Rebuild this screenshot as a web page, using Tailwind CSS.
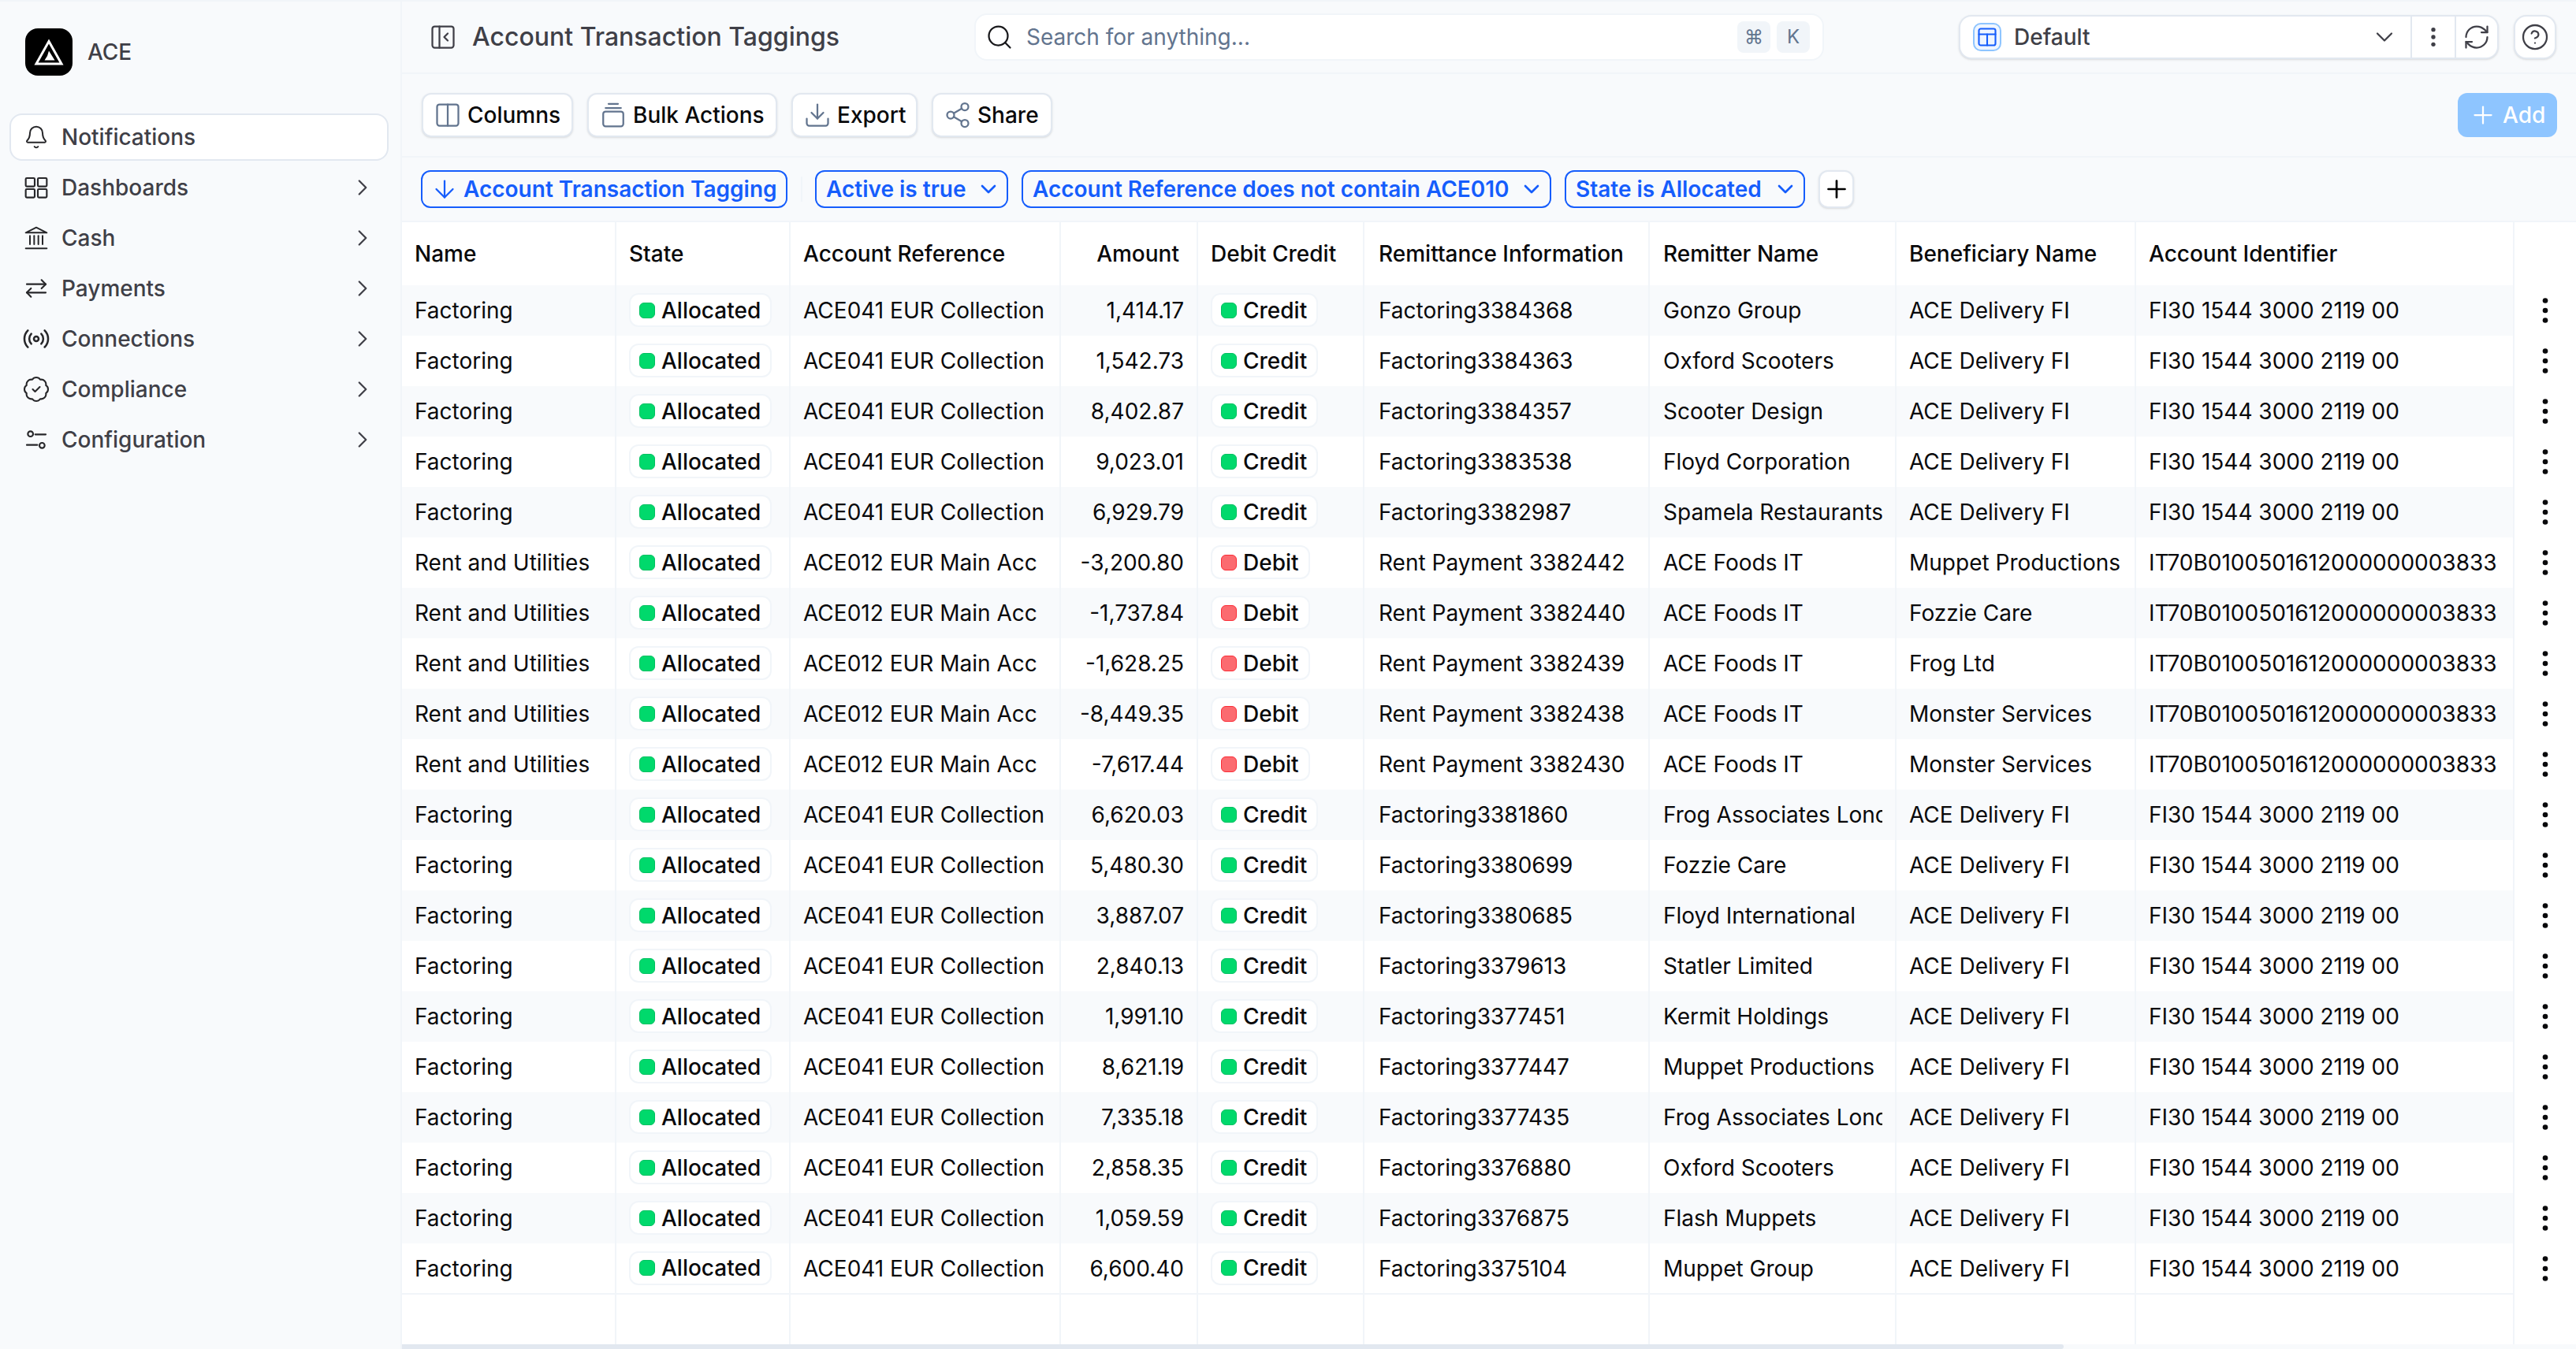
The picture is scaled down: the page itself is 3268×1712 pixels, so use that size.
<!DOCTYPE html>
<html lang="en">
<head>
    <meta charset="UTF-8">
    <title>Account Transaction Taggings</title>
    <script src="https://cdn.jsdelivr.net/npm/@tailwindcss/browser@4"></script>
</head>
<body class="bg-[#f8fafc] font-['Inter',sans-serif] text-[28px] text-zinc-950 overflow-hidden">
<div class="flex h-[1712px] w-[3268px] border-t-2 border-slate-100">

    <!-- sidebar -->
    <aside class="w-[510px] shrink-0 border-r-2 border-slate-100 pl-3 pr-[15px]">
        <div class="flex h-[142px] items-start gap-[19px] pl-5 pt-[34px]">
            <div class="flex size-[60px] items-center justify-center rounded-2xl bg-black">
                <svg class="size-[60px]" viewBox="0 0 60 60" fill="none" stroke="white" stroke-width="3">
                    <path d="M30 16.5 46 45H14Z"/>
                    <path d="M30 28.5 37.5 40.5H24.5L28 35Z" fill="white" stroke="none"/>
                </svg>
            </div>
            <span class="font-medium leading-[60px] text-zinc-700">ACE</span>
        </div>
        <nav class="flex flex-col font-medium text-zinc-700">
            <a class="mb-0.5 flex h-[60px] items-center gap-4 rounded-2xl border-2 border-slate-200 bg-white pl-4">
                <svg class="size-8 text-zinc-800" viewBox="0 0 24 24" fill="none" stroke="currentColor" stroke-width="1.5" stroke-linecap="round" stroke-linejoin="round"><path d="M10.268 21a2 2 0 0 0 3.464 0"/><path d="M3.262 15.326A1 1 0 0 0 4 17h16a1 1 0 0 0 .74-1.673C19.41 13.956 18 12.499 18 8A6 6 0 0 0 6 8c0 4.499-1.411 5.956-2.738 7.326"/></svg>
                Notifications
            </a>
            <a class="flex h-[64px] items-center gap-4 pl-[18px] pr-4">
                <svg class="size-8 text-zinc-800" viewBox="0 0 24 24" fill="none" stroke="currentColor" stroke-width="1.6" stroke-linejoin="round"><rect x="2" y="3" width="8.5" height="8" rx="1"/><rect x="13.5" y="3" width="8.5" height="8" rx="1"/><rect x="2" y="13.5" width="8.5" height="8" rx="1"/><rect x="13.5" y="13.5" width="8.5" height="8" rx="1"/></svg>
                Dashboards
                <svg class="ml-auto size-[34px]" viewBox="0 0 24 24" fill="none" stroke="currentColor" stroke-width="1.6" stroke-linecap="round" stroke-linejoin="round"><path d="m9 18 6-6-6-6"/></svg>
            </a>
            <a class="flex h-[64px] items-center gap-4 pl-[18px] pr-4">
                <svg class="size-8 text-zinc-800" viewBox="0 0 24 24" fill="none" stroke="currentColor" stroke-width="1.5" stroke-linecap="round" stroke-linejoin="round"><path d="M2 22h20"/><path d="M6 18v-8"/><path d="M10 18v-8"/><path d="M14 18v-8"/><path d="M18 18v-8"/><path d="M2 7 12 2l10 5Z"/></svg>
                Cash
                <svg class="ml-auto size-[34px]" viewBox="0 0 24 24" fill="none" stroke="currentColor" stroke-width="1.6" stroke-linecap="round" stroke-linejoin="round"><path d="m9 18 6-6-6-6"/></svg>
            </a>
            <a class="flex h-[64px] items-center gap-4 pl-[18px] pr-4">
                <svg class="size-8 text-zinc-800" viewBox="0 0 24 24" fill="none" stroke="currentColor" stroke-width="1.6" stroke-linecap="round" stroke-linejoin="round"><path d="M21 8H3"/><path d="m17 4 4 4-4 4"/><path d="M3 16h18"/><path d="m7 12-4 4 4 4"/></svg>
                Payments
                <svg class="ml-auto size-[34px]" viewBox="0 0 24 24" fill="none" stroke="currentColor" stroke-width="1.6" stroke-linecap="round" stroke-linejoin="round"><path d="m9 18 6-6-6-6"/></svg>
            </a>
            <a class="flex h-[64px] items-center gap-4 pl-[18px] pr-4">
                <svg class="-mx-0.5 size-9 text-zinc-800" viewBox="0 0 24 24" fill="none" stroke="currentColor" stroke-width="1.7" stroke-linecap="round" stroke-linejoin="round"><path d="M4.9 19.1C1 15.2 1 8.8 4.9 4.9"/><path d="M7.8 16.2c-2.3-2.3-2.3-6.1 0-8.5"/><circle cx="12" cy="12" r="2"/><path d="M16.2 7.8c2.3 2.3 2.3 6.1 0 8.5"/><path d="M19.1 4.9C23 8.8 23 15.1 19.1 19"/></svg>
                Connections
                <svg class="ml-auto size-[34px]" viewBox="0 0 24 24" fill="none" stroke="currentColor" stroke-width="1.6" stroke-linecap="round" stroke-linejoin="round"><path d="m9 18 6-6-6-6"/></svg>
            </a>
            <a class="flex h-[64px] items-center gap-4 pl-[18px] pr-4">
                <svg class="-mx-0.5 size-9 text-zinc-800" viewBox="0 0 24 24" fill="none" stroke="currentColor" stroke-width="1.4" stroke-linecap="round" stroke-linejoin="round"><path d="M3.85 8.62a4 4 0 0 1 4.78-4.77 4 4 0 0 1 6.74 0 4 4 0 0 1 4.78 4.78 4 4 0 0 1 0 6.74 4 4 0 0 1-4.77 4.78 4 4 0 0 1-6.75 0 4 4 0 0 1-4.78-4.77 4 4 0 0 1 0-6.76Z"/><path d="m9 12 2 2 4-4"/></svg>
                Compliance
                <svg class="ml-auto size-[34px]" viewBox="0 0 24 24" fill="none" stroke="currentColor" stroke-width="1.6" stroke-linecap="round" stroke-linejoin="round"><path d="m9 18 6-6-6-6"/></svg>
            </a>
            <a class="flex h-[64px] items-center gap-4 pl-[18px] pr-4">
                <svg class="size-8 text-zinc-800" viewBox="0 0 24 24" fill="none" stroke="currentColor" stroke-width="1.6" stroke-linecap="round" stroke-linejoin="round"><path d="M11 7h10"/><circle cx="6.5" cy="6.5" r="2.5"/><path d="M3 17h10"/><circle cx="17.5" cy="17.5" r="2.5"/></svg>
                Configuration
                <svg class="ml-auto size-[34px]" viewBox="0 0 24 24" fill="none" stroke="currentColor" stroke-width="1.6" stroke-linecap="round" stroke-linejoin="round"><path d="m9 18 6-6-6-6"/></svg>
            </a>
        </nav>
    </aside>

    <main class="flex min-w-0 flex-1 flex-col">
        <!-- top bar -->
        <header class="flex h-[92px] shrink-0 items-center border-b-2 border-slate-100 pl-[34px]">
            <svg class="size-9 text-zinc-700" viewBox="0 0 24 24" fill="none" stroke="currentColor" stroke-width="1.5" stroke-linecap="round" stroke-linejoin="round"><rect x="3" y="3" width="18" height="18" rx="2"/><path d="M9 3v18"/><path d="m16 15-3-3 3-3"/></svg>
            <h1 class="ml-[19px] w-[637px] text-[32px] font-medium text-zinc-700">Account Transaction Taggings</h1>
            <div class="flex h-[60px] w-[1078px] items-center rounded-2xl border-2 border-slate-100 bg-white pl-3 pr-4">
                <svg class="size-9 text-zinc-900" viewBox="0 0 24 24" fill="none" stroke="currentColor" stroke-width="1.5" stroke-linecap="round" stroke-linejoin="round"><circle cx="11" cy="11" r="8"/><path d="m21 21-4.3-4.3"/></svg>
                <span class="ml-4 text-slate-500">Search for anything...</span>
                <span class="ml-auto flex gap-2 text-[24px] text-slate-500">
                    <kbd class="flex h-10 w-[42px] items-center justify-center rounded-lg bg-slate-100 font-['Inter',sans-serif]">⌘</kbd>
                    <kbd class="flex h-10 w-[42px] items-center justify-center rounded-lg bg-slate-100 font-['Inter',sans-serif]">K</kbd>
                </span>
            </div>
            <div class="ml-[171px] flex h-14 w-[685px] items-center rounded-2xl border-2 border-slate-200 bg-white shadow-sm">
                <div class="ml-4 flex size-9 items-center justify-center rounded-[10px] border-2 border-blue-300 bg-blue-50">
                    <svg class="size-7 text-blue-600" viewBox="0 0 24 24" fill="none" stroke="currentColor" stroke-width="1.8" stroke-linecap="round" stroke-linejoin="round"><rect x="3" y="3" width="18" height="18" rx="2"/><path d="M3 9h18"/><path d="M12 9v12"/></svg>
                </div>
                <span class="ml-4 font-medium text-zinc-700">Default</span>
                <svg class="ml-auto mr-[15px] size-9 text-zinc-700" viewBox="0 0 24 24" fill="none" stroke="currentColor" stroke-width="1.5" stroke-linecap="round" stroke-linejoin="round"><path d="m6 9 6 6 6-6"/></svg>
                <div class="flex h-full w-[56px] items-center justify-center border-l-2 border-slate-200">
                    <svg class="size-8 text-zinc-700" viewBox="0 0 24 24" fill="currentColor"><circle cx="12" cy="5" r="2"/><circle cx="12" cy="12" r="2"/><circle cx="12" cy="19" r="2"/></svg>
                </div>
                <div class="flex h-full w-[54px] items-center justify-center border-l-2 border-slate-200">
                    <svg class="size-9 text-zinc-700" viewBox="0 0 24 24" fill="none" stroke="currentColor" stroke-width="1.5" stroke-linecap="round" stroke-linejoin="round"><path d="M3 12a9 9 0 0 1 9-9 9.75 9.75 0 0 1 6.74 2.74L21 8"/><path d="M21 3v5h-5"/><path d="M21 12a9 9 0 0 1-9 9 9.75 9.75 0 0 1-6.74-2.74L3 16"/><path d="M8 16H3v5"/></svg>
                </div>
            </div>
            <div class="ml-[19px] flex h-14 w-[54px] items-center justify-center rounded-2xl border-2 border-slate-200 bg-white shadow-sm">
                <svg class="size-9 text-zinc-700" viewBox="0 0 24 24" fill="none" stroke="currentColor" stroke-width="1.5" stroke-linecap="round" stroke-linejoin="round"><circle cx="12" cy="12" r="10"/><path d="M9.09 9a3 3 0 0 1 5.83 1c0 2-3 3-3 3"/><path d="M12 17h.01"/></svg>
            </div>
        </header>

        <!-- toolbar -->
        <div class="flex h-[106px] shrink-0 items-center gap-[18px] border-b-2 border-slate-100 pl-[25px] pr-6">
            <button class="flex h-[56px] w-[192px] items-center gap-[7px] rounded-xl border-2 border-slate-200 bg-white pl-[13px] font-medium shadow-sm">
                <svg class="size-9 text-slate-500" viewBox="0 0 24 24" fill="none" stroke="currentColor" stroke-width="1.5" stroke-linecap="round" stroke-linejoin="round"><rect x="3" y="3" width="18" height="18" rx="2"/><path d="M12 3v18"/></svg>
                Columns
            </button>
            <button class="flex h-[56px] w-[241px] items-center gap-[7px] rounded-xl border-2 border-slate-200 bg-white pl-[13px] font-medium shadow-sm">
                <svg class="size-9 text-slate-500" viewBox="0 0 24 24" fill="none" stroke="currentColor" stroke-width="1.5" stroke-linecap="round" stroke-linejoin="round"><rect x="3.5" y="9" width="17" height="12.5" rx="2"/><path d="M5.5 6h13"/><path d="M8 2.5h8"/></svg>
                Bulk Actions
            </button>
            <button class="flex h-[56px] w-[160px] items-center gap-[7px] rounded-xl border-2 border-slate-200 bg-white pl-[13px] font-medium shadow-sm">
                <svg class="size-9 text-slate-500" viewBox="0 0 24 24" fill="none" stroke="currentColor" stroke-width="1.5" stroke-linecap="round" stroke-linejoin="round"><path d="M12 15V3"/><path d="M21 15v4a2 2 0 0 1-2 2H5a2 2 0 0 1-2-2v-4"/><path d="m7 10 5 5 5-5"/></svg>
                Export
            </button>
            <button class="flex h-[56px] w-[153px] items-center gap-[7px] rounded-xl border-2 border-slate-200 bg-white pl-[13px] font-medium shadow-sm">
                <svg class="size-9 text-slate-500" viewBox="0 0 24 24" fill="none" stroke="currentColor" stroke-width="1.5" stroke-linecap="round" stroke-linejoin="round"><circle cx="18" cy="5" r="3"/><circle cx="6" cy="12" r="3"/><circle cx="18" cy="19" r="3"/><path d="m8.59 13.51 6.83 3.98"/><path d="m15.41 6.51-6.82 3.98"/></svg>
                Share
            </button>
            <button class="ml-auto flex h-[56px] w-[126px] items-center gap-[7px] rounded-xl bg-blue-300 pl-3.5 font-medium text-white">
                <svg class="size-9" viewBox="0 0 24 24" fill="none" stroke="currentColor" stroke-width="1.5" stroke-linecap="round" stroke-linejoin="round"><path d="M5 12h14"/><path d="M12 5v14"/></svg>
                Add
            </button>
        </div>

        <!-- filters -->
        <div class="flex h-[82px] shrink-0 items-center border-b-2 border-slate-100 pl-[24px] font-semibold text-blue-600">
            <div class="flex h-12 w-[465px] items-center gap-1.5 rounded-xl border-2 border-blue-600 pl-2.5">
                <svg class="size-9" viewBox="0 0 24 24" fill="none" stroke="currentColor" stroke-width="1.5" stroke-linecap="round" stroke-linejoin="round"><path d="M12 5v14"/><path d="m19 12-7 7-7-7"/></svg>
                Account Transaction Tagging
            </div>
            <div class="ml-[17px] mr-4 h-8 w-0.5 bg-slate-100"></div>
            <div class="flex h-12 w-[245px] items-center justify-between rounded-xl border-2 border-blue-600 pl-3 pr-[7px]">
                Active is true
                <svg class="size-8" viewBox="0 0 24 24" fill="none" stroke="currentColor" stroke-width="2" stroke-linecap="round" stroke-linejoin="round"><path d="m6 9 6 6 6-6"/></svg>
            </div>
            <div class="ml-[17px] flex h-12 w-[672px] items-center justify-between rounded-xl border-2 border-blue-600 pl-3 pr-[7px]">
                Account Reference does not contain ACE010
                <svg class="size-8" viewBox="0 0 24 24" fill="none" stroke="currentColor" stroke-width="2" stroke-linecap="round" stroke-linejoin="round"><path d="m6 9 6 6 6-6"/></svg>
            </div>
            <div class="ml-[17px] flex h-12 w-[305px] items-center justify-between rounded-xl border-2 border-blue-600 pl-3 pr-[7px]">
                State is Allocated
                <svg class="size-8" viewBox="0 0 24 24" fill="none" stroke="currentColor" stroke-width="2" stroke-linecap="round" stroke-linejoin="round"><path d="m6 9 6 6 6-6"/></svg>
            </div>
            <button class="ml-[17px] flex h-12 w-[45px] items-center justify-center rounded-xl border-2 border-slate-200 bg-white text-black shadow-sm">
                <svg class="size-9 shrink-0" viewBox="0 0 24 24" fill="none" stroke="currentColor" stroke-width="1.8" stroke-linecap="round" stroke-linejoin="round"><path d="M5 12h14"/><path d="M12 5v14"/></svg>
            </button>
        </div>

        <!-- table -->
        <div class="min-h-0 flex-1 bg-white">
            <table class="w-[2758px] table-fixed border-collapse">
                <colgroup>
                    <col class="w-[271px]"><col class="w-[221px]"><col class="w-[343px]"><col class="w-[174px]"><col class="w-[211px]">
                    <col class="w-[362px]"><col class="w-[313px]"><col class="w-[304px]"><col class="w-[480px]"><col class="w-[79px]">
                </colgroup>
                <thead>
                    <tr class="h-20 text-left">
                        <th class="border-r-2 border-slate-100 pl-4 font-medium">Name</th>
                        <th class="border-r-2 border-slate-100 pl-4 font-medium">State</th>
                        <th class="border-r-2 border-slate-100 pl-4 font-medium">Account Reference</th>
                        <th class="border-r-2 border-slate-100 pr-[22px] text-right font-medium">Amount</th>
                        <th class="border-r-2 border-slate-100 pl-4 font-medium">Debit Credit</th>
                        <th class="border-r-2 border-slate-100 pl-[18px] font-medium">Remittance Information</th>
                        <th class="border-r-2 border-slate-100 pl-[17px] font-medium">Remitter Name</th>
                        <th class="border-r-2 border-slate-100 pl-4 font-medium">Beneficiary Name</th>
                        <th class="border-r-2 border-slate-100 pl-4 font-medium">Account Identifier</th>
                        <th></th>
                    </tr>
                </thead>
                <tbody id="rows"></tbody>
            </table>
        </div>
        <!-- horizontal scrollbar -->
        <div class="h-[6px] shrink-0 bg-[#f8fafc]">
            <div class="h-full w-[2108px] rounded-r-full bg-slate-200"></div>
        </div>
    </main>
</div>

<script>
    const rows = [
        ['Factoring', 'ACE041 EUR Collection', '1,414.17', 'Credit', 'Factoring3384368', 'Gonzo Group', 'ACE Delivery FI', 'FI30 1544 3000 2119 00'],
        ['Factoring', 'ACE041 EUR Collection', '1,542.73', 'Credit', 'Factoring3384363', 'Oxford Scooters', 'ACE Delivery FI', 'FI30 1544 3000 2119 00'],
        ['Factoring', 'ACE041 EUR Collection', '8,402.87', 'Credit', 'Factoring3384357', 'Scooter Design', 'ACE Delivery FI', 'FI30 1544 3000 2119 00'],
        ['Factoring', 'ACE041 EUR Collection', '9,023.01', 'Credit', 'Factoring3383538', 'Floyd Corporation', 'ACE Delivery FI', 'FI30 1544 3000 2119 00'],
        ['Factoring', 'ACE041 EUR Collection', '6,929.79', 'Credit', 'Factoring3382987', 'Spamela Restaurants', 'ACE Delivery FI', 'FI30 1544 3000 2119 00'],
        ['Rent and Utilities', 'ACE012 EUR Main Acc', '-3,200.80', 'Debit', 'Rent Payment 3382442', 'ACE Foods IT', 'Muppet Productions', 'IT70B0100501612000000003833'],
        ['Rent and Utilities', 'ACE012 EUR Main Acc', '-1,737.84', 'Debit', 'Rent Payment 3382440', 'ACE Foods IT', 'Fozzie Care', 'IT70B0100501612000000003833'],
        ['Rent and Utilities', 'ACE012 EUR Main Acc', '-1,628.25', 'Debit', 'Rent Payment 3382439', 'ACE Foods IT', 'Frog Ltd', 'IT70B0100501612000000003833'],
        ['Rent and Utilities', 'ACE012 EUR Main Acc', '-8,449.35', 'Debit', 'Rent Payment 3382438', 'ACE Foods IT', 'Monster Services', 'IT70B0100501612000000003833'],
        ['Rent and Utilities', 'ACE012 EUR Main Acc', '-7,617.44', 'Debit', 'Rent Payment 3382430', 'ACE Foods IT', 'Monster Services', 'IT70B0100501612000000003833'],
        ['Factoring', 'ACE041 EUR Collection', '6,620.03', 'Credit', 'Factoring3381860', 'Frog Associates London', 'ACE Delivery FI', 'FI30 1544 3000 2119 00'],
        ['Factoring', 'ACE041 EUR Collection', '5,480.30', 'Credit', 'Factoring3380699', 'Fozzie Care', 'ACE Delivery FI', 'FI30 1544 3000 2119 00'],
        ['Factoring', 'ACE041 EUR Collection', '3,887.07', 'Credit', 'Factoring3380685', 'Floyd International', 'ACE Delivery FI', 'FI30 1544 3000 2119 00'],
        ['Factoring', 'ACE041 EUR Collection', '2,840.13', 'Credit', 'Factoring3379613', 'Statler Limited', 'ACE Delivery FI', 'FI30 1544 3000 2119 00'],
        ['Factoring', 'ACE041 EUR Collection', '1,991.10', 'Credit', 'Factoring3377451', 'Kermit Holdings', 'ACE Delivery FI', 'FI30 1544 3000 2119 00'],
        ['Factoring', 'ACE041 EUR Collection', '8,621.19', 'Credit', 'Factoring3377447', 'Muppet Productions', 'ACE Delivery FI', 'FI30 1544 3000 2119 00'],
        ['Factoring', 'ACE041 EUR Collection', '7,335.18', 'Credit', 'Factoring3377435', 'Frog Associates London', 'ACE Delivery FI', 'FI30 1544 3000 2119 00'],
        ['Factoring', 'ACE041 EUR Collection', '2,858.35', 'Credit', 'Factoring3376880', 'Oxford Scooters', 'ACE Delivery FI', 'FI30 1544 3000 2119 00'],
        ['Factoring', 'ACE041 EUR Collection', '1,059.59', 'Credit', 'Factoring3376875', 'Flash Muppets', 'ACE Delivery FI', 'FI30 1544 3000 2119 00'],
        ['Factoring', 'ACE041 EUR Collection', '6,600.40', 'Credit', 'Factoring3375104', 'Muppet Group', 'ACE Delivery FI', 'FI30 1544 3000 2119 00'],
    ];

    const line = 'border-r-2 border-slate-100 whitespace-nowrap';
    const badge = 'inline-flex h-[43px] -translate-y-px items-center gap-2 rounded-xl border-2 border-slate-100 bg-white pl-[11px] pr-3 font-medium align-middle';
    const green = 'h-5 w-5 rounded-md border border-[#00c060] bg-[#00d96c]';
    const red = 'h-5 w-5 rounded-md border border-red-500 bg-[#fb6b70]';

    const html = rows.map((r, i) => {
        const bg = i % 2 === 0 ? 'bg-[#f8fafc]' : 'bg-white';
        const dot = r[3] === 'Credit' ? green : red;
        return `<tr class="h-16 ${bg}">
            <td class="${line} pl-4">${r[0]}</td>
            <td class="${line} pl-4"><span class="${badge}"><i class="${green}"></i>Allocated</span></td>
            <td class="${line} pl-4">${r[1]}</td>
            <td class="${line} pr-4 text-right">${r[2]}</td>
            <td class="${line} pl-4"><span class="${badge}"><i class="${dot}"></i>${r[3]}</span></td>
            <td class="${line} pl-[18px]">${r[4]}</td>
            <td class="${line} pl-[17px] pr-4"><div class="overflow-hidden">${r[5]}</div></td>
            <td class="${line} pl-4">${r[6]}</td>
            <td class="${line} pl-4">${r[7]}</td>
            <td class="bg-white"><svg class="mx-auto size-10" viewBox="0 0 24 24" fill="currentColor"><circle cx="12" cy="4.5" r="2"/><circle cx="12" cy="12" r="2"/><circle cx="12" cy="19.5" r="2"/></svg></td>
        </tr>`;
    }).join('');

    const filler = `<tr class="h-16 border-t-2 border-slate-100">${'<td class="border-r-2 border-slate-100"></td>'.repeat(9)}<td class="border-t-2 border-white"></td></tr>`;
    document.getElementById('rows').innerHTML = html + filler;
</script>
</body>
</html>
